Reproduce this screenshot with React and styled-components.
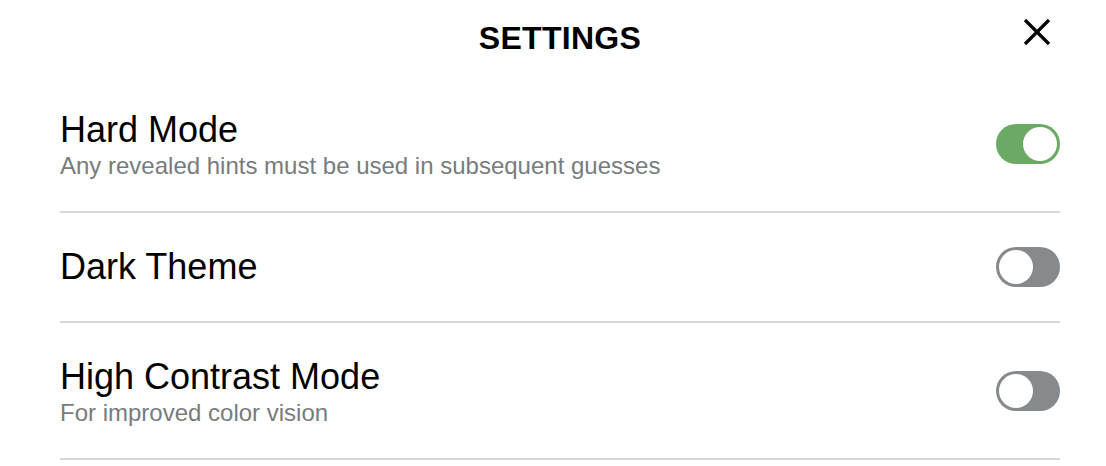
import styled, { createGlobalStyle } from "styled-components";

const GlobalStyle = createGlobalStyle`
    body {
        margin: 0;
        background: #ffffff;
        font-family: "Liberation Sans", Arial, sans-serif;
        color: #000000;
    }
`;

const settings = [
    { key: "hard", title: "Hard Mode", description: "Any revealed hints must be used in subsequent guesses", on: true },
    { key: "dark", title: "Dark Theme", on: false },
    { key: "contrast", title: "High Contrast Mode", description: "For improved color vision", on: false },
];

const CloseIcon = () => (
    <svg width="28" height="28" viewBox="0 0 28 28" aria-hidden="true">
        <path d="M2 2 L26 26 M26 2 L2 26" stroke="#000" strokeWidth="3.2" fill="none" />
    </svg>
);

const App = () => {
    return (
        <>
            <GlobalStyle />
            <Panel>
                <Header>
                    <span />
                    <Title>Settings</Title>
                    <CloseButton aria-label="Close">
                        <CloseIcon />
                    </CloseButton>
                </Header>
                <List>
                    {settings.map((item) => (
                        <Row key={item.key}>
                            <Text>
                                <RowTitle>{item.title}</RowTitle>
                                {item.description && <RowDescription>{item.description}</RowDescription>}
                            </Text>
                            <Switch $on={item.on}>
                                <Knob />
                            </Switch>
                        </Row>
                    ))}
                </List>
            </Panel>
        </>
    );
};

export default App;

const Panel = styled.div`
    width: 1000px;
    margin-left: 60px;
`;

const Header = styled.header`
    display: grid;
    grid-template-columns: 1fr auto 1fr;
    align-items: center;
    height: 76px;
`;

const Title = styled.h1`
    margin: 0;
    font-size: 32px;
    font-weight: 700;
    letter-spacing: 0.3px;
    text-transform: uppercase;
    line-height: 1;
`;

const CloseButton = styled.button`
    justify-self: end;
    margin: 0 9px 12px 0;
    padding: 0;
    border: none;
    background: none;
    display: flex;
    cursor: pointer;
`;

const List = styled.section`
    display: flex;
    flex-direction: column;
`;

const Row = styled.div`
    display: flex;
    justify-content: space-between;
    align-items: center;
    padding: 32px 0;
    border-bottom: 2px solid #d3d6da;
`;

const Text = styled.div`
    display: flex;
    flex-direction: column;
`;

const RowTitle = styled.div`
    font-size: 36px;
    line-height: 44px;
`;

const RowDescription = styled.div`
    font-size: 24px;
    line-height: 27px;
    color: #787c7e;
`;

const Switch = styled.div`
    width: 64px;
    height: 40px;
    border-radius: 20px;
    padding: 3px;
    box-sizing: border-box;
    display: flex;
    justify-content: ${(props) => (props.$on ? "flex-end" : "flex-start")};
    background: ${(props) => (props.$on ? "#6aaa64" : "#878a8c")};
`;

const Knob = styled.div`
    width: 34px;
    height: 34px;
    border-radius: 50%;
    background: #ffffff;
`;
